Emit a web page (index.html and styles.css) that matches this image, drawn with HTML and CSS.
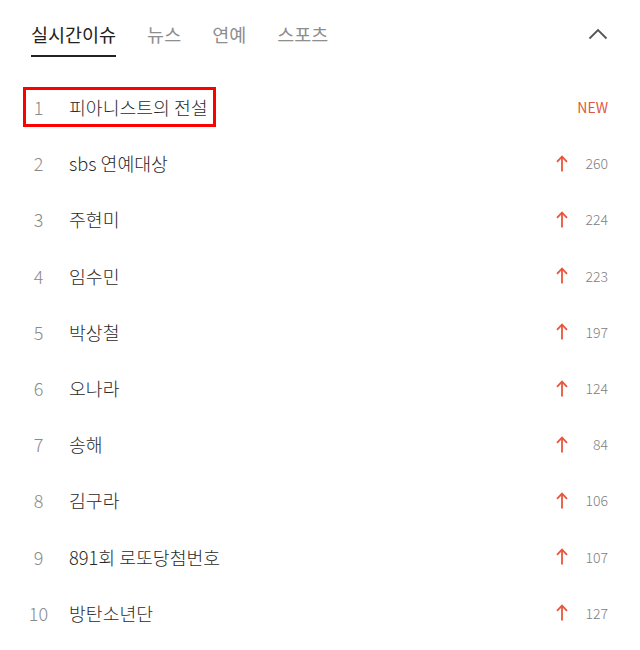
FILE: index.html
```html
<!DOCTYPE html>
<html>

<head>
    <meta charset="UTF-8">
    <title>실시간이슈</title>
    <link rel="stylesheet" href="styles.css">
</head>

<body>
    <div class="issue">
        <div class="head">
            <div class="tabs">
                <a href="#" class="active">실시간이슈</a>
                <a href="#">뉴스</a>
                <a href="#">연예</a>
                <a href="#">스포츠</a>
            </div>
            <span class="fold">
                <svg width="20" height="12" viewBox="0 0 20 12"><path d="M1.5 10.5 L10 2 L18.5 10.5" fill="none" stroke="#555" stroke-width="1.8"/></svg>
            </span>
        </div>
        <ol class="list">
            <li class="row pick">
                <span class="main"><span class="rank">1</span><span class="title">피아니스트의 전설</span></span>
                <span class="meta"><span class="new">NEW</span></span>
            </li>
            <li class="row">
                <span class="main"><span class="rank">2</span><span class="title">sbs 연예대상</span></span>
                <span class="meta"><i class="up"></i><span class="num">260</span></span>
            </li>
            <li class="row">
                <span class="main"><span class="rank">3</span><span class="title">주현미</span></span>
                <span class="meta"><i class="up"></i><span class="num">224</span></span>
            </li>
            <li class="row">
                <span class="main"><span class="rank">4</span><span class="title">임수민</span></span>
                <span class="meta"><i class="up"></i><span class="num">223</span></span>
            </li>
            <li class="row">
                <span class="main"><span class="rank">5</span><span class="title">박상철</span></span>
                <span class="meta"><i class="up"></i><span class="num">197</span></span>
            </li>
            <li class="row">
                <span class="main"><span class="rank">6</span><span class="title">오나라</span></span>
                <span class="meta"><i class="up"></i><span class="num">124</span></span>
            </li>
            <li class="row">
                <span class="main"><span class="rank">7</span><span class="title">송해</span></span>
                <span class="meta"><i class="up"></i><span class="num">84</span></span>
            </li>
            <li class="row">
                <span class="main"><span class="rank">8</span><span class="title">김구라</span></span>
                <span class="meta"><i class="up"></i><span class="num">106</span></span>
            </li>
            <li class="row">
                <span class="main"><span class="rank">9</span><span class="title">891회 로또당첨번호</span></span>
                <span class="meta"><i class="up"></i><span class="num">107</span></span>
            </li>
            <li class="row">
                <span class="main"><span class="rank">10</span><span class="title">방탄소년단</span></span>
                <span class="meta"><i class="up"></i><span class="num">127</span></span>
            </li>
        </ol>
    </div>
    <script>
        var ups = document.querySelectorAll('.up');
        for (var i = 0; i < ups.length; i++) {
            ups[i].innerHTML = '<svg width="12" height="17" viewBox="0 0 12 17"><path d="M6 16.5 V1.8 M1 6.8 L6 1.6 L11 6.8" fill="none" stroke="#e8573e" stroke-width="1.8"/></svg>';
        }
    </script>
</body>
</html>
```

FILE: styles.css
```css
* {
    margin: 0;
    padding: 0;
}

body {
    background: #fff;
    font-family: "Noto Sans CJK KR", "Noto Sans", sans-serif;
    color: #222;
}

.issue {
    width: 640px;
}

.head {
    display: flex;
    align-items: center;
    justify-content: space-between;
    padding: 22px 32px 0 31px;
}

.tabs {
    display: flex;
    gap: 31px;
}

.tabs a {
    display: block;
    font-size: 18.5px;
    line-height: 24px;
    padding-bottom: 9px;
    border-bottom: 2px solid transparent;
    color: #8e8e8e;
    text-decoration: none;
}

.tabs .active {
    color: #222;
    border-bottom-color: #222;
}

.fold {
    display: flex;
    margin-bottom: 11px;
}

.list {
    list-style: none;
    margin-top: 22px;
    padding: 0 32px 0 26px;
}

.row {
    display: flex;
    align-items: center;
    height: 56.2px;
}

.main {
    display: flex;
    align-items: center;
    height: 34px;
    padding-right: 5px;
}

.pick .main {
    outline: 3px solid #f00;
}

.rank {
    width: 25px;
    text-align: center;
    font-size: 18px;
    font-weight: 300;
    color: #8a8a8a;
}

.title {
    margin-left: 18px;
    font-size: 18.3px;
    font-weight: 300;
    color: #2a2a2a;
}

.meta {
    margin-left: auto;
    display: flex;
    align-items: center;
}

.up {
    display: flex;
    margin-right: 10px;
}

.num {
    width: 30px;
    text-align: right;
    font-size: 14px;
    font-weight: 300;
    color: #808080;
}

.new {
    font-size: 14px;
    color: #e0573f;
}
```
